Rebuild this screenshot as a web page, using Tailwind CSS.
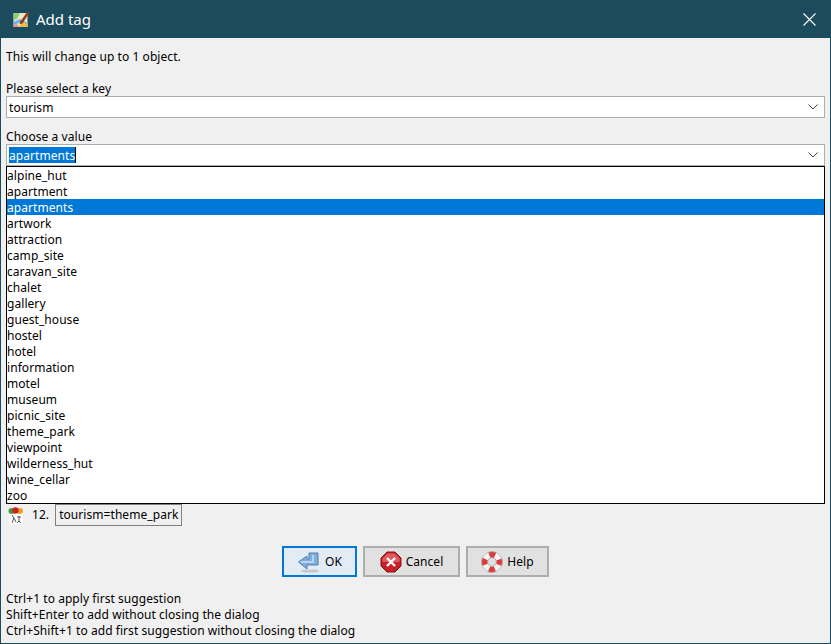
<!DOCTYPE html>
<html lang="en">
<head>
<meta charset="UTF-8" />
<title>Add tag</title>
<script src="https://cdn.jsdelivr.net/npm/@tailwindcss/browser@4"></script>
</head>
<body class="w-[831px] h-[644px] overflow-hidden bg-[#f0f0f0] text-black font-['Noto_Sans','DejaVu_Sans',sans-serif] text-[12px] leading-[18px] tracking-[0.06px]">
<div class="relative w-[831px] h-[644px] flex flex-col border-x border-b border-[#1b4b5c]">
  <!-- title bar -->
  <div class="h-[38px] shrink-0 bg-[#1b4b5c] text-white flex items-center pl-[12px]">
    <svg width="17" height="17" viewBox="0 0 17 17">
      <rect x="0.5" y="2" width="14" height="14" fill="#efe6c4"/>
      <path d="M0.5 2 H7 L4 8 L0.5 9 Z" fill="#8fcb78"/>
      <path d="M0.5 11 L7 8 L14.5 12 V16 H10 L6 12 L0.5 14 Z" fill="#6fb0e8"/>
      <path d="M6 16 L9 11 L14.5 13 V16 Z" fill="#f5bd3a"/>
      <path d="M0.5 14 L4 13 L6 16 H0.5 Z" fill="#e88f8f"/>
      <path d="M7 11 L14.5 0.5 L16.5 1.5 L9.5 12.5 L7 13 Z" fill="#8f3f1c"/>
    </svg>
    <span class="ml-[6px] text-[15px] tracking-normal">Add tag</span>
    <svg class="ml-auto mr-[14px]" width="13" height="13" viewBox="0 0 13 13"><path d="M0.5 0.5 L12.5 12.5 M12.5 0.5 L0.5 12.5" stroke="#fff" stroke-width="1.1" fill="none"/></svg>
  </div>

  <div class="px-[5px] flex flex-col">
    <p class="mt-[10px] h-[16px]">This will change up to 1 object.</p>

    <label class="mt-[16px] h-[16px] block">Please select a key</label>
    <div class="h-[22px] bg-white border border-[#adadad] flex items-center pl-[2px] pr-[6px]">
      <span class="mt-[2px]">tourism</span>
      <svg class="ml-auto" width="10" height="6" viewBox="0 0 10 6"><path d="M0.5 0.5 L5 5 L9.5 0.5" stroke="#444" fill="none"/></svg>
    </div>

    <label class="mt-[10px] h-[16px] block">Choose a value</label>
    <div class="h-[22px] bg-white border border-[#adadad] flex items-center pl-[2px] pr-[6px]">
      <span class="h-[16px] bg-[#0078d7] text-white border-r border-black">apartments</span>
      <svg class="ml-auto" width="10" height="6" viewBox="0 0 10 6"><path d="M0.5 0.5 L5 5 L9.5 0.5" stroke="#444" fill="none"/></svg>
    </div>

    <!-- suggestion row sits under the open list -->
    <div class="relative h-[338px]">
      <ul class="absolute left-0 right-0 top-0 h-[338px] bg-white border border-black z-10">
        <li class="h-[16px]">alpine_hut</li>
        <li class="h-[16px]">apartment</li>
        <li class="h-[16px] bg-[#0078d7] text-white">apartments</li>
        <li class="h-[16px]">artwork</li>
        <li class="h-[16px]">attraction</li>
        <li class="h-[16px]">camp_site</li>
        <li class="h-[16px]">caravan_site</li>
        <li class="h-[16px]">chalet</li>
        <li class="h-[16px]">gallery</li>
        <li class="h-[16px]">guest_house</li>
        <li class="h-[16px]">hostel</li>
        <li class="h-[16px]">hotel</li>
        <li class="h-[16px]">information</li>
        <li class="h-[16px]">motel</li>
        <li class="h-[16px]">museum</li>
        <li class="h-[16px]">picnic_site</li>
        <li class="h-[16px]">theme_park</li>
        <li class="h-[16px]">viewpoint</li>
        <li class="h-[16px]">wilderness_hut</li>
        <li class="h-[16px]">wine_cellar</li>
        <li class="h-[16px]">zoo</li>
      </ul>
    </div>

    <div class="h-[22px] flex items-center">
      <svg class="ml-[2px]" width="16" height="17" viewBox="0 0 16 17">
        <rect x="1" y="6" width="14" height="11" fill="#fff"/>
        <circle cx="3.5" cy="4" r="3" fill="#3f9e3a"/>
        <circle cx="12" cy="4" r="3" fill="#e6a520"/>
        <circle cx="7.5" cy="3.5" r="3.2" fill="#cc2222"/>
        <path d="M4 8 L6 11 M6 11 L4 16 M6 11 L8 15 M9 10 H13 M11 9 V14 M11 14 L9 16 M11 14 L13 16" stroke="#555" fill="none"/>
      </svg>
      <span class="ml-[8px]">12.</span>
      <span class="ml-[6px] h-[22px] px-[3px] flex items-center border border-[#808080]">tourism=theme_park</span>
    </div>

    <div class="mt-[20px] flex justify-center gap-[6px]">
      <button class="w-[75px] h-[31px] flex items-center justify-center gap-[4px] bg-[#e3ecf4] border-2 border-[#0078d7]">
        <svg width="24" height="24" viewBox="0 0 24 24">
          <ellipse cx="13" cy="21" rx="9" ry="1.6" fill="#c4c8cc"/>
          <path d="M12 3 H21 V15 H10 V19 L1.5 12 L10 6 V9 H12 Z" fill="#82aedb" stroke="#4f7fb0"/>
          <path d="M3.5 12 H16 V5" fill="none" stroke="#cfe2f5" stroke-width="1.4"/>
        </svg>
        <span>OK</span>
      </button>
      <button class="w-[97px] h-[31px] flex items-center justify-center gap-[4px] bg-[#e1e1e1] border-2 border-[#adadad]">
        <svg width="22" height="22" viewBox="0 0 22 22">
          <path d="M7 1 H15 L21 7 V15 L15 21 H7 L1 15 V7 Z" fill="#c8202a" stroke="#8a1018"/>
          <path d="M2.5 7.5 L7.5 2.5 H14.5 L19.5 7.5 V11 H2.5 Z" fill="#dd5a60"/>
          <path d="M7 7 L15 15 M15 7 L7 15" stroke="#fff" stroke-width="2.4" fill="none"/>
        </svg>
        <span>Cancel</span>
      </button>
      <button class="w-[83px] h-[31px] flex items-center justify-center gap-[4px] bg-[#e1e1e1] border-2 border-[#adadad]">
        <svg width="22" height="22" viewBox="0 0 22 22">
          <circle cx="11" cy="11" r="7.5" fill="none" stroke="#f4f4f4" stroke-width="6"/>
          <circle cx="11" cy="11" r="7.5" fill="none" stroke="#e03a3a" stroke-width="6" stroke-dasharray="5.9 5.9" stroke-dashoffset="3"/>
          <circle cx="11" cy="11" r="4.3" fill="none" stroke="#999" stroke-width="0.7"/>
          <circle cx="11" cy="11" r="10.4" fill="none" stroke="#aaa" stroke-width="0.7"/>
        </svg>
        <span>Help</span>
      </button>
    </div>

    <div class="mt-[13px]">
      <p class="h-[16px]">Ctrl+1 to apply first suggestion</p>
      <p class="h-[16px]">Shift+Enter to add without closing the dialog</p>
      <p class="h-[16px]">Ctrl+Shift+1 to add first suggestion without closing the dialog</p>
    </div>
  </div>
</div>
</body>
</html>
